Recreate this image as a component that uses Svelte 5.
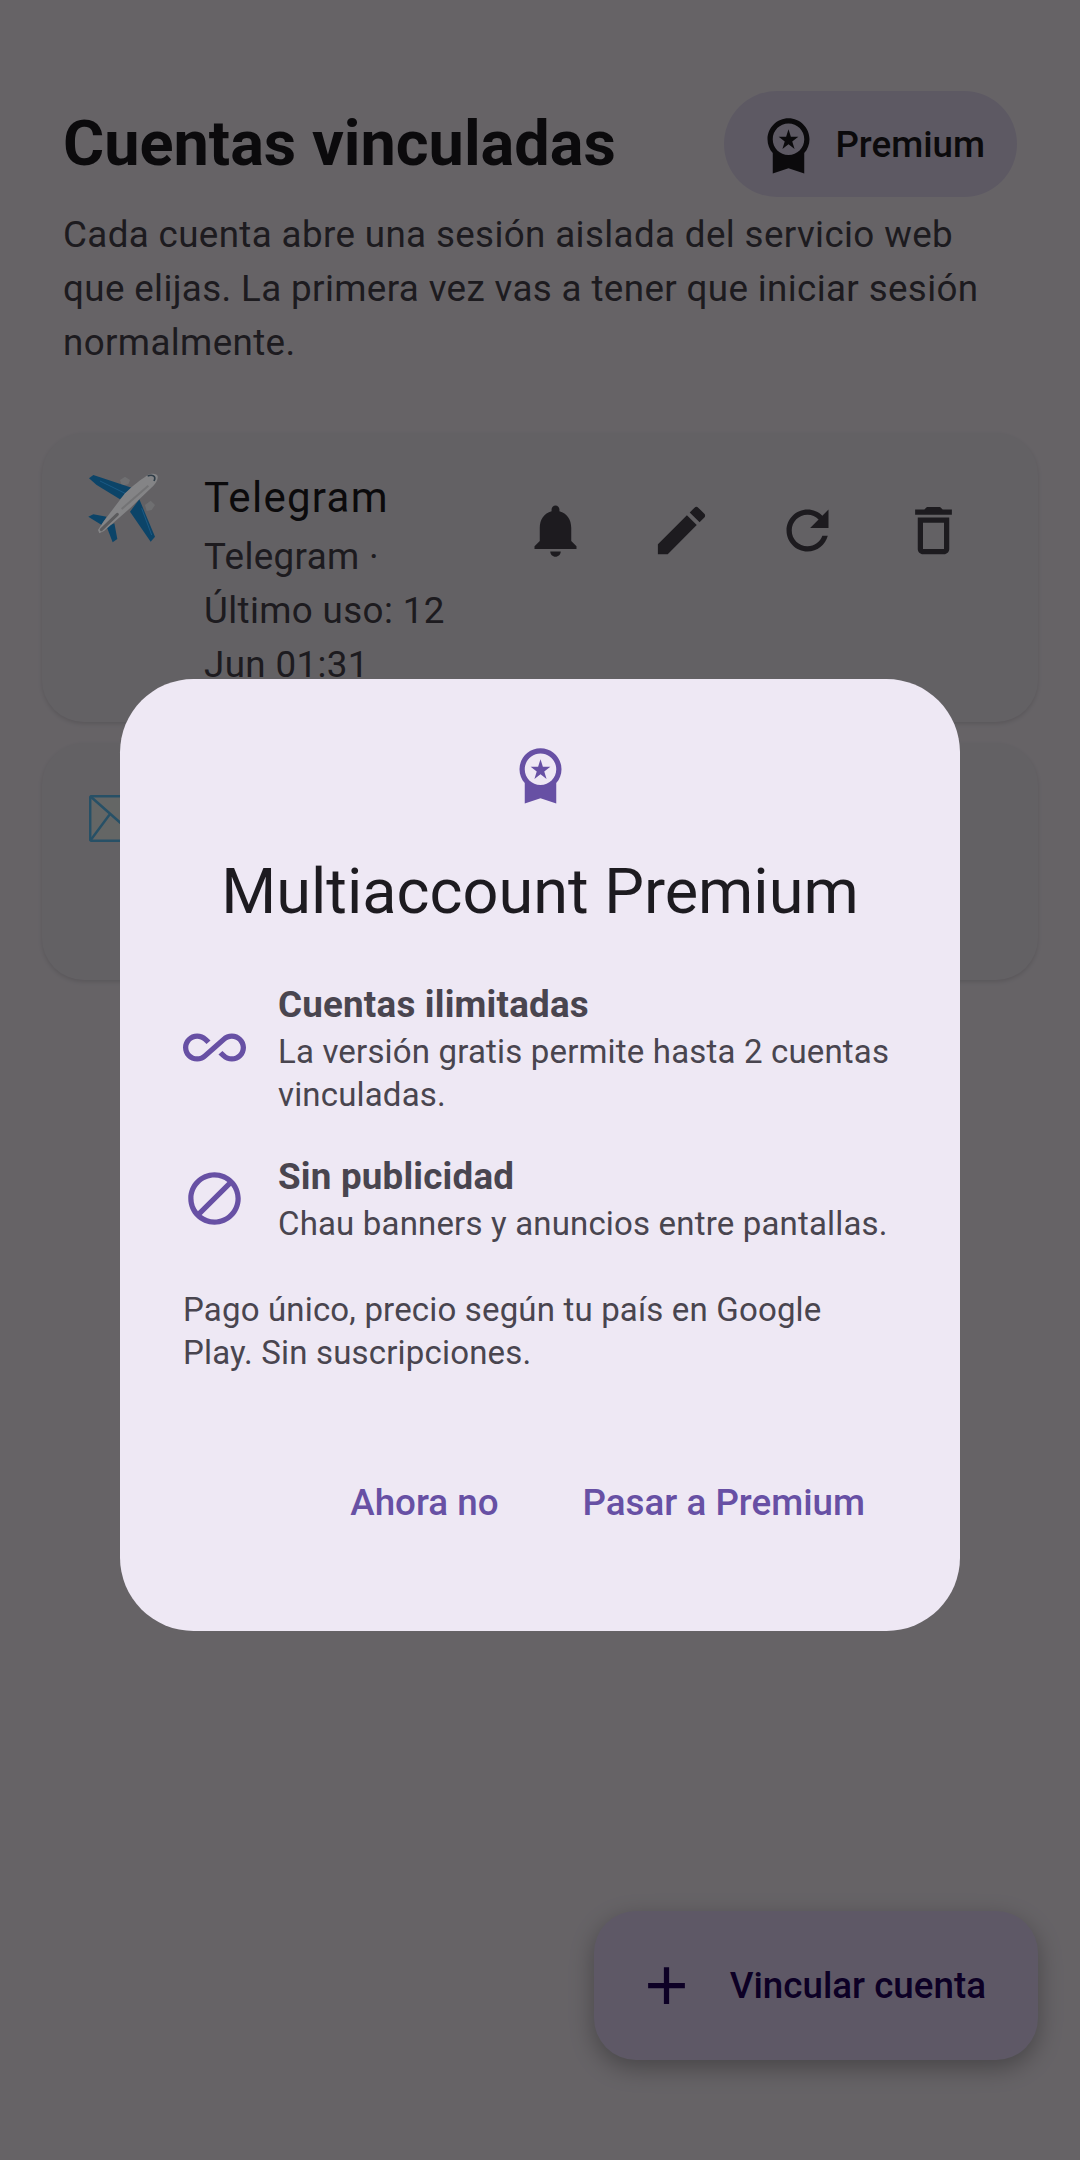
<script lang="ts">
  const premiumPath =
    "M9.68,13.69L12,11.93l2.31,1.76l-0.88-2.85L15.75,9h-2.84L12,6.19L11.09,9H8.25l2.31,1.84L9.68,13.69z M20,10c0-4.42-3.58-8-8-8s-8,3.58-8,8c0,2.03,0.76,3.87,2,5.28V23l6-2l6,2v-7.72C19.24,13.87,20,12.03,20,10z M12,4c3.31,0,6,2.69,6,6s-2.69,6-6,6s-6-2.69-6-6S8.69,4,12,4z";

  const actions = [
    { label: "Notificaciones", d: "M12 22c1.1 0 2-.9 2-2h-4c0 1.1.89 2 2 2zm6-6v-5c0-3.07-1.64-5.64-4.5-6.32V4c0-.83-.67-1.5-1.5-1.5s-1.5.67-1.5 1.5v.68C7.63 5.36 6 7.92 6 11v5l-2 2v1h16v-1l-2-2z" },
    { label: "Editar", d: "M3 17.25V21h3.75L17.81 9.94l-3.75-3.75L3 17.25zM20.71 7.04c.39-.39.39-1.02 0-1.41l-2.34-2.34c-.39-.39-1.02-.39-1.41 0l-1.83 1.83 3.75 3.75 1.83-1.83z" },
    { label: "Reiniciar", d: "M17.65 6.35C16.2 4.9 14.21 4 12 4c-4.42 0-7.99 3.58-7.99 8s3.57 8 7.99 8c3.73 0 6.84-2.55 7.73-6h-2.08c-.82 2.33-3.04 4-5.65 4-3.31 0-6-2.69-6-6s2.69-6 6-6c1.66 0 3.14.69 4.22 1.78L13 11h7V4l-2.35 2.35z" },
    { label: "Eliminar", d: "M6 19c0 1.1.9 2 2 2h8c1.1 0 2-.9 2-2V7H6v12zM8 9h8v10H8V9zm7.5-5l-1-1h-5l-1 1H5v2h14V4h-3.5z" }
  ];

  const perks = [
    {
      title: "Cuentas ilimitadas",
      text: "La versión gratis permite hasta 2 cuentas vinculadas.",
      d: "M18.6 6.62c-1.44 0-2.8.56-3.77 1.53L12 10.66 10.48 12h.01L7.8 14.39c-.64.64-1.49.99-2.4.99-1.87 0-3.39-1.51-3.39-3.38S3.53 8.62 5.4 8.62c.91 0 1.76.35 2.44 1.03l1.13 1 1.51-1.34L9.22 8.2C8.2 7.18 6.84 6.62 5.4 6.62 2.42 6.62 0 9.04 0 12s2.42 5.38 5.4 5.38c1.44 0 2.8-.56 3.77-1.53l2.83-2.5.01.01L13.52 12h-.01l2.69-2.39c.64-.64 1.49-.99 2.4-.99 1.87 0 3.39 1.51 3.39 3.38s-1.52 3.38-3.39 3.38c-.9 0-1.76-.35-2.44-1.03l-1.14-1.01-1.51 1.34 1.27 1.12c1.02 1.01 2.37 1.57 3.82 1.57 2.98 0 5.4-2.41 5.4-5.38s-2.42-5.37-5.4-5.37z"
    },
    {
      title: "Sin publicidad",
      text: "Chau banners y anuncios entre pantallas.",
      d: "M12 2C6.48 2 2 6.48 2 12s4.48 10 10 10 10-4.48 10-10S17.52 2 12 2zM4 12c0-4.42 3.58-8 8-8 1.85 0 3.55.63 4.9 1.69L5.69 16.9C4.63 15.55 4 13.85 4 12zm8 8c-1.85 0-3.55-.63-4.9-1.69L18.31 7.1C19.37 8.45 20 10.15 20 12c0 4.42-3.58 8-8 8z"
    }
  ];
</script>

<div class="screen">
  <header class="head">
    <h1>Cuentas vinculadas</h1>
    <button class="chip">
      <svg class="icon" viewBox="0 0 24 24"><path d={premiumPath} /></svg>
      <span>Premium</span>
    </button>
  </header>
  <p class="intro">Cada cuenta abre una sesión aislada del servicio web que elijas. La primera vez vas a tener que iniciar sesión normalmente.</p>

  <div class="cards">
    <div class="card first">
      <svg class="emoji" viewBox="0 0 270 255">
        <polygon fill="#6f6f71" points="120,45 135,35 150,45 145,58 125,62" />
        <polygon fill="#6f6f71" points="195,120 212,107 225,120 215,135 200,138" />
        <polygon fill="#0c4468" points="27,40 40,30 155,68 120,103 50,60" />
        <polygon fill="#0c4468" points="178,103 225,215 212,230 150,140" />
        <polygon fill="#0c4468" points="25,155 40,148 80,155 65,180" />
        <polygon fill="#0c4468" points="80,185 103,175 112,222 98,232" />
        <path d="M60 48 L135 85 M185 130 L215 210" fill="none" stroke="#1b5a85" stroke-width="3" />
        <path d="M200 32 C212 24 232 24 233 34 C235 46 222 62 210 72 L150 130 L72 198 L58 205 L54 195 L70 170 L135 85 C160 60 185 42 200 32 Z" fill="#848486" />
        <path d="M64 194 L112 148" fill="none" stroke="#5b5b5d" stroke-width="9" stroke-linecap="round" />
        <path d="M125 132 L205 62" fill="none" stroke="#737375" stroke-width="6" />
        <path d="M203 33 C216 28 230 32 222 48" fill="none" stroke="#2f3d48" stroke-width="5" />
      </svg>
      <div class="info">
        <div class="name">Telegram</div>
        <div class="meta">Telegram · Último uso: 12 Jun 01:31</div>
      </div>
      <div class="actions">
        {#each actions as action}
          <button class="action" aria-label={action.label}>
            <svg class="icon" viewBox="0 0 24 24"><path d={action.d} /></svg>
          </button>
        {/each}
      </div>
    </div>

    <div class="card second">
      <svg class="mail" viewBox="0 0 70 47">
        <rect x="1.2" y="1.2" width="67.6" height="44.6" rx="1.5" fill="#fafffd" stroke="#62c8ff" stroke-width="2.5" />
        <path d="M1 1 L35 31 L69 1 M1 46 L21 19 M69 46 L49 19" fill="none" stroke="#62c8ff" stroke-width="2.5" />
      </svg>
    </div>
  </div>

  <button class="fab">
    <svg class="icon" viewBox="0 0 24 24"><path d="M19 13h-6v6h-2v-6H5v-2h6V5h2v6h6v2z" /></svg>
    <span>Vincular cuenta</span>
  </button>

  <div class="scrim">
    <div class="dialog">
      <svg class="icon top" viewBox="0 0 24 24"><path d={premiumPath} /></svg>
      <h2>Multiaccount Premium</h2>
      {#each perks as perk}
        <div class="perk">
          <svg class="icon" viewBox="0 0 24 24"><path d={perk.d} /></svg>
          <div class="perk-text">
            <strong>{perk.title}</strong>
            <span>{perk.text}</span>
          </div>
        </div>
      {/each}
      <p class="note">Pago único, precio según tu país en Google Play. Sin suscripciones.</p>
      <div class="buttons">
        <button>Ahora no</button>
        <button>Pasar a Premium</button>
      </div>
    </div>
  </div>
</div>

<style>
  :global(body) {
    margin: 0;
    background: #fff;
  }

  button {
    border: none;
    background: none;
    padding: 0;
    font: inherit;
    color: inherit;
  }

  .screen {
    position: relative;
    height: 2160px;
    overflow: hidden;
    background: #fef7ff;
    font-family: Roboto, "Noto Sans", sans-serif;
    color: #1d1b20;
  }

  .icon {
    display: block;
    width: 63px;
    height: 63px;
    flex: none;
    fill: currentColor;
  }

  .head {
    display: flex;
    align-items: center;
    justify-content: space-between;
    padding: 91px 63px 0 63px;
  }

  h1 {
    margin: 0;
    font-size: 63px;
    font-weight: 700;
    line-height: 106px;
  }

  .chip {
    display: flex;
    align-items: center;
    gap: 15px;
    height: 106px;
    padding: 0 32px 0 33px;
    border-radius: 53px;
    background: #e8def8;
    font-size: 36.75px;
    font-weight: 500;
  }

  .intro {
    margin: 11px 63px 0 63px;
    font-size: 36.75px;
    line-height: 54px;
    letter-spacing: 0.37px;
    color: #49454f;
  }

  .cards {
    display: flex;
    flex-direction: column;
    gap: 21px;
    padding: 63px 42px 0;
  }

  .card {
    display: flex;
    box-sizing: border-box;
    border-radius: 42px;
    background: #f7f2fa;
    box-shadow: 0 2px 4px rgba(0, 0, 0, 0.12);
  }

  .first {
    height: 289px;
    padding: 39px 42px 0;
    overflow: hidden;
  }

  .second {
    height: 237px;
    padding: 52px 47px 0;
  }

  /* the emoji keeps its own brightness in the reference, so it sits over the scrim */
  .emoji {
    position: relative;
    z-index: 1;
    width: 90px;
    height: 85px;
    flex: none;
    margin: -7px 0 0 -4px;
  }

  .mail {
    width: 70px;
    height: 47px;
  }

  .info {
    width: 268px;
    margin: -6.5px 0 0 34px;
    flex: none;
  }

  .name {
    font-size: 42px;
    line-height: 64px;
    letter-spacing: 1.3px;
  }

  .meta {
    font-size: 36.75px;
    line-height: 54px;
    letter-spacing: 0.37px;
    color: #49454f;
  }

  .actions {
    display: flex;
    margin-left: auto;
    margin-top: -5px;
    height: 126px;
    color: #49454f;
  }

  .action {
    display: flex;
    align-items: center;
    justify-content: center;
    width: 126px;
    height: 126px;
  }

  .fab {
    position: absolute;
    right: 42px;
    top: 1911px;
    display: flex;
    align-items: center;
    gap: 32px;
    height: 149px;
    padding: 0 52px 0 41px;
    border-radius: 42px;
    background: #eaddff;
    color: #21005d;
    font-size: 36.75px;
    font-weight: 500;
    box-shadow: 0 8px 24px rgba(0, 0, 0, 0.3);
  }

  .scrim {
    position: absolute;
    inset: 0;
    display: flex;
    justify-content: center;
    align-items: flex-start;
    padding-top: 679px;
    background: rgba(0, 0, 0, 0.6);
  }

  .dialog {
    box-sizing: border-box;
    width: 840px;
    height: 952px;
    padding: 64px 63px 0;
    border-radius: 73.5px;
    background: #eee8f4;
    color: #49454f;
  }

  .top {
    margin: 0 auto;
    color: #6750a4;
  }

  h2 {
    margin: 44px 0 45.5px;
    text-align: center;
    font-size: 63px;
    font-weight: 400;
    line-height: 84px;
    color: #1d1b20;
  }

  .perk {
    display: flex;
    align-items: center;
    gap: 32px;
  }

  .perk + .perk {
    margin-top: 36px;
  }

  .perk .icon {
    color: #6750a4;
  }

  .perk-text {
    display: flex;
    flex-direction: column;
  }

  .perk-text strong {
    font-size: 36.75px;
    font-weight: 700;
    line-height: 50px;
    letter-spacing: 0.2px;
  }

  .perk-text span {
    font-size: 33px;
    line-height: 43px;
    letter-spacing: 0.17px;
  }

  .note {
    margin: 43.5px 0 0;
    font-size: 33px;
    line-height: 43px;
    letter-spacing: 0.17px;
  }

  .buttons {
    display: flex;
    justify-content: flex-end;
    gap: 20px;
    margin-top: 76px;
  }

  .buttons button {
    height: 105px;
    padding: 0 32px;
    font-size: 36.75px;
    font-weight: 500;
    color: #6750a4;
  }
</style>
